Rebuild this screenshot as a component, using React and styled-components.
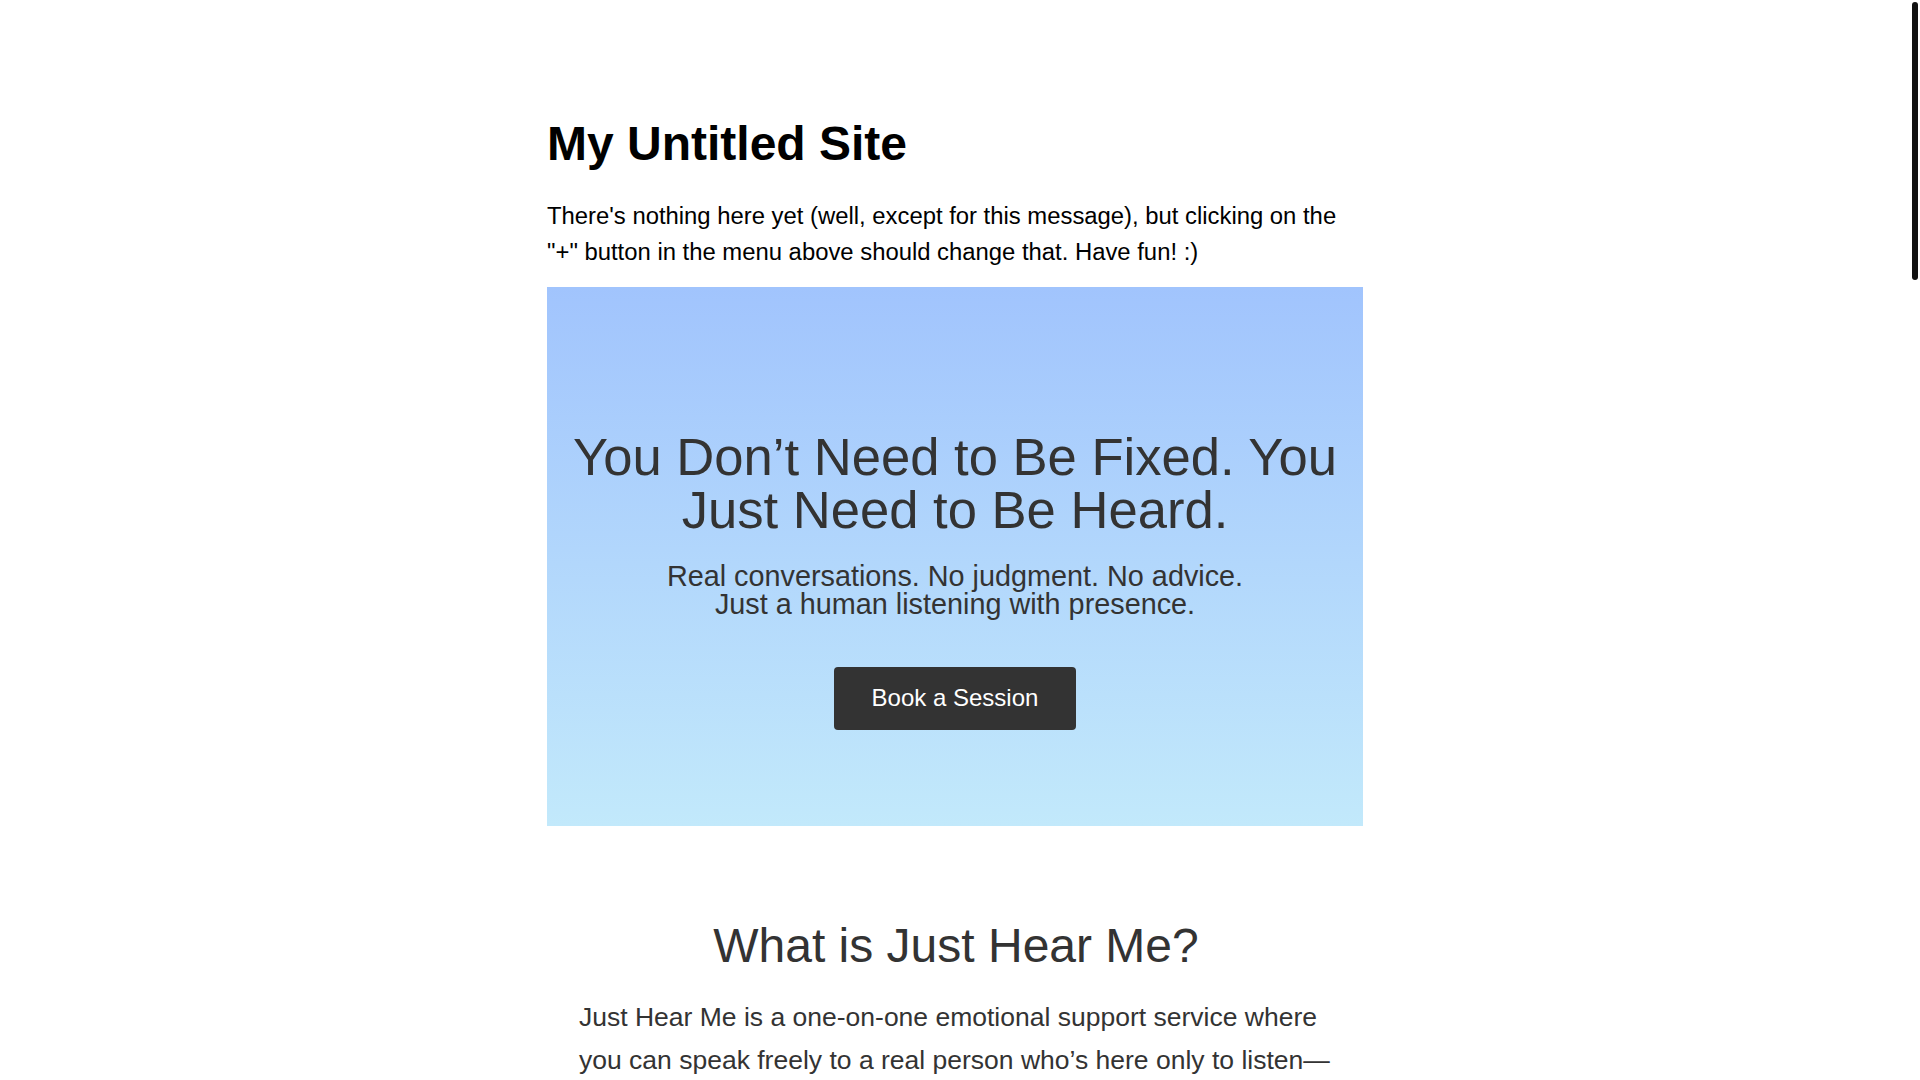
import React from 'react';
import styled, { createGlobalStyle } from 'styled-components';

const GlobalStyle = createGlobalStyle`
    html {
        background: #fff;
    }
    body {
        margin: 0;
        padding-right: 10px;
        font-family: 'Liberation Sans', Arial, sans-serif;
        color: #000;
    }
    * {
        box-sizing: border-box;
    }
`;

// overlay scroll thumb, the page is long
const ScrollThumb = styled.div`
    position: fixed;
    top: 2px;
    right: 2px;
    width: 6px;
    height: 278px;
    border-radius: 3px;
    background: #111;
`;

const Page = styled.div`
    width: 816px;
    min-height: 4190px;
    margin: 0 auto;
    padding-top: 116px;
`;

const SiteTitle = styled.h1`
    margin: 0;
    font-size: 48px;
    line-height: 56px;
    font-weight: 700;
`;

const Intro = styled.p`
    margin: 26px 0 17px;
    font-size: 23.85px;
    line-height: 36px;
`;

const Hero = styled.section`
    display: flex;
    flex-direction: column;
    align-items: center;
    padding: 143px 16px 96px;
    background: linear-gradient(to bottom, #a1c4fd, #c2e9fb);
    color: #333;
    text-align: center;
`;

const HeroTitle = styled.h2`
    margin: 0;
    font-size: 52.6px;
    line-height: 53.3px;
    font-weight: 400;
`;

const HeroText = styled.p`
    margin: 25px 0 49px;
    font-size: 28.8px;
    line-height: 28px;
`;

const Button = styled.a`
    display: inline-block;
    padding: 17.5px 37.5px;
    border-radius: 4px;
    background: #333;
    color: #fff;
    font-size: 24px;
    text-decoration: none;
    cursor: pointer;
`;

const Section = styled.section`
    padding: ${(p) => (p.first ? '92px' : '64px')} 30px 0 32px;
    color: #333;
`;

const SectionTitle = styled.h2`
    margin: 0 0 23px;
    font-size: 48px;
    font-weight: 400;
    text-align: center;
`;

const SectionText = styled.p`
    margin: 0 0 24px;
    font-size: 26.5px;
    line-height: 43.2px;
`;

const App = () => {
    return (
        <>
            <GlobalStyle />
            <ScrollThumb />
            <Page>
                <SiteTitle>My Untitled Site</SiteTitle>
                <Intro>
                    There's nothing here yet (well, except for this message), but clicking on the "+" button in the
                    menu above should change that. Have fun! :)
                </Intro>
                <Hero>
                    <HeroTitle>You Don’t Need to Be Fixed. You Just Need to Be Heard.</HeroTitle>
                    <HeroText>
                        Real conversations. No judgment. No advice.
                        <br />
                        Just a human listening with presence.
                    </HeroText>
                    <Button href='#book'>Book a Session</Button>
                </Hero>
                <Section first>
                    <SectionTitle>What is Just Hear Me?</SectionTitle>
                    <SectionText>
                        Just Hear Me is a one-on-one emotional support service where you can speak freely to a real
                        person who’s here only to listen—not to fix, judge, or advise. Whether you’re carrying stress,
                        grief, loneliness, or simply a heavy day, you’ll be met with calm, patient attention.
                    </SectionText>
                </Section>
                <Section>
                    <SectionTitle>How It Works</SectionTitle>
                    <SectionText>
                        Choose a time that suits you, join a private call, and talk about whatever is on your mind.
                        Your listener stays with you, without interrupting or steering the conversation.
                    </SectionText>
                </Section>
                <Section>
                    <SectionTitle>Who It’s For</SectionTitle>
                    <SectionText>
                        Anyone who needs to be heard. You don’t need a diagnosis or a reason—only the wish to say
                        something out loud to someone who cares.
                    </SectionText>
                </Section>
            </Page>
        </>
    );
};

export default App;
